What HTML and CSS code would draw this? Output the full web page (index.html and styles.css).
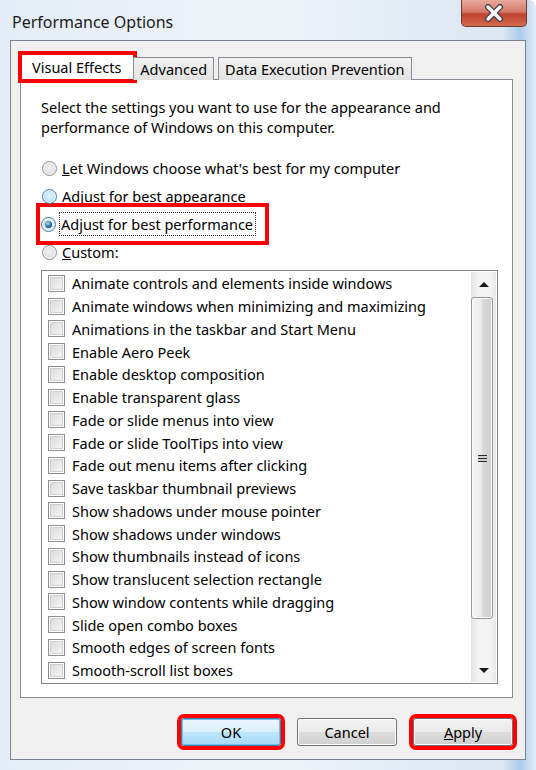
FILE: index.html
```html
<!DOCTYPE html>
<html lang="en">
<head>
    <meta charset="utf-8">
    <title>Performance Options</title>
    <link rel="stylesheet" href="styles.css">
</head>
<body>

    <div class="window">
        <div class="titlebar">
            <span class="title">Performance Options</span>
            <div class="close">
                <svg width="26" height="18" viewBox="0 0 26 18">
                    <path d="M7 3 L19 15 M19 3 L7 15" stroke="#3b3f4a" stroke-width="6" stroke-linecap="round"/>
                    <path d="M7 3 L19 15 M19 3 L7 15" stroke="#fff" stroke-width="3.4" stroke-linecap="round"/>
                </svg>
            </div>
        </div>

        <div class="client">
            <div class="tabs">
                <div class="tab active marked">Visual Effects</div>
                <div class="tab">Advanced</div>
                <div class="tab">Data Execution Prevention</div>
            </div>

            <div class="panel">
                <p class="intro">Select the settings you want to use for the appearance and performance of Windows on this computer.</p>

                <div class="radios">
                    <label class="radio"><span class="dot"></span><span><u>L</u>et Windows choose what's best for my computer</span></label>
                    <label class="radio hover"><span class="dot"></span><span>Adjust for best appearance</span></label>
                    <label class="radio checked marked"><span class="dot"></span><span class="focus">Adjust for best performance</span></label>
                    <label class="radio"><span class="dot"></span><span><u>C</u>ustom:</span></label>
                </div>

                <div class="listbox">
                    <ul class="items">
                        <li><span class="box"></span>Animate controls and elements inside windows</li>
                        <li><span class="box"></span>Animate windows when minimizing and maximizing</li>
                        <li><span class="box"></span>Animations in the taskbar and Start Menu</li>
                        <li><span class="box"></span>Enable Aero Peek</li>
                        <li><span class="box"></span>Enable desktop composition</li>
                        <li><span class="box"></span>Enable transparent glass</li>
                        <li><span class="box"></span>Fade or slide menus into view</li>
                        <li><span class="box"></span>Fade or slide ToolTips into view</li>
                        <li><span class="box"></span>Fade out menu items after clicking</li>
                        <li><span class="box"></span>Save taskbar thumbnail previews</li>
                        <li><span class="box"></span>Show shadows under mouse pointer</li>
                        <li><span class="box"></span>Show shadows under windows</li>
                        <li><span class="box"></span>Show thumbnails instead of icons</li>
                        <li><span class="box"></span>Show translucent selection rectangle</li>
                        <li><span class="box"></span>Show window contents while dragging</li>
                        <li><span class="box"></span>Slide open combo boxes</li>
                        <li><span class="box"></span>Smooth edges of screen fonts</li>
                        <li><span class="box"></span>Smooth-scroll list boxes</li>
                    </ul>
                    <div class="scrollbar">
                        <div class="arrow up"></div>
                        <div class="thumb"><span class="grip"></span></div>
                        <div class="track"></div>
                        <div class="arrow down"></div>
                    </div>
                </div>
            </div>

            <div class="buttons">
                <button class="btn default marked">OK</button>
                <button class="btn">Cancel</button>
                <button class="btn marked"><u>A</u>pply</button>
            </div>
        </div>
    </div>

</body>
</html>
```

FILE: styles.css
```css
body {
    margin: 0;
    background-color: #fff;
    font-family: "Noto Sans", "DejaVu Sans", sans-serif;
    font-size: 14.5px;
    color: #000;
}
.window {
    width: 536px;
    height: 770px;
    box-sizing: border-box;
    padding: 0 10px 10px 10px;
    display: flex;
    flex-direction: column;
    background: linear-gradient(to right, #e4ecf5 0%, #eef3f8 50%, #dbe6f2 94%, #a9cbea 97%, #e6edf5 100%);
    border-top-right-radius: 8px;
}
.titlebar {
    height: 40px;
    display: flex;
    justify-content: space-between;
    align-items: flex-start;
    flex-shrink: 0;
}
.title {
    font-size: 16px;
    color: #1c1c1c;
    margin: 11px 0 0 2px;
}
.close {
    width: 66px;
    height: 27px;
    box-sizing: border-box;
    margin-right: -1px;
    border: 1px solid #6e3a33;
    border-top: none;
    border-radius: 0 0 5px 5px;
    background: linear-gradient(#e8a99c 0%, #d67a6a 45%, #c04330 55%, #d36a4e 100%);
    display: flex;
    align-items: center;
    justify-content: center;
}
.client {
    flex: 1;
    background-color: #f0f0f0;
    border: 1px solid #79828d;
    display: flex;
    flex-direction: column;
    padding: 14px 12px 0 9px;
}
.tabs {
    display: flex;
    align-items: flex-end;
    height: 25px;
    position: relative;
    z-index: 1;
    margin-bottom: -1px;
}
.tab {
    height: 22px;
    padding: 0 6px;
    border: 1px solid #898c95;
    border-bottom: none;
    background: linear-gradient(#f2f2f2, #e3e3e3);
    line-height: 22px;
    margin-left: -1px;
}
.tab + .tab {
    margin-left: 4px;
}
.tab.active {
    height: 25px;
    background: #fff;
    padding: 0 12px 0 10px;
    margin-left: 1px;
    line-height: 25px;
}
.tab.active + .tab {
    margin-left: -1px;
}
.marked {
    outline: 4px solid #f00;
    outline-offset: 0;
}
.tab.marked {
    outline-offset: -1px;
}
.panel {
    height: 619px;
    box-sizing: border-box;
    background-color: #fff;
    border: 1px solid #898c95;
    padding: 17px 14px 14px 20px;
    display: flex;
    flex-direction: column;
}
.intro {
    margin: 0;
    line-height: 20px;
    width: 430px;
}
.radios {
    margin-top: 17px;
    display: flex;
    flex-direction: column;
}
.radio {
    display: flex;
    align-items: center;
    height: 28px;
    gap: 5px;
    margin-left: 1px;
    width: fit-content;
}
.radio .dot {
    width: 13px;
    height: 13px;
    border: 1px solid #8e8f8f;
    border-radius: 50%;
    background: radial-gradient(circle at 50% 45%, #f4f4f4 0%, #dcdcdc 70%, #c8c8c8 100%);
    box-shadow: inset 0 0 0 1px #fff;
    position: relative;
}
.radio.hover .dot {
    border-color: #3c7fb1;
    background: radial-gradient(circle at 50% 45%, #e6f5fd 0%, #b4dcf3 70%, #8ac4e8 100%);
}
.radio.checked .dot {
    border-color: #3c7fb1;
}
.radio.checked .dot::after {
    content: "";
    position: absolute;
    left: 3px;
    top: 3px;
    width: 7px;
    height: 7px;
    border-radius: 50%;
    background: radial-gradient(circle at 40% 35%, #9fe0ff 0%, #1a6fae 55%, #0d3c6e 100%);
}
.radio.marked {
    outline-offset: 1px;
    padding: 2px 10px 2px 0;
    margin: -2px 0;
}
.focus {
    outline: 1px dotted #333;
    outline-offset: 1px;
    padding-right: 1px;
}
.listbox {
    margin-top: 4px;
    flex: 1;
    border: 1px solid #828790;
    display: flex;
    padding: 1px 1px 1px 0;
}
.items {
    list-style: none;
    margin: 0;
    padding: 0 0 0 6px;
    flex: 1;
}
.items li {
    display: flex;
    align-items: center;
    height: 22.75px;
    gap: 7px;
}
.box {
    width: 15px;
    height: 15px;
    border: 1px solid #8e8f8f;
    box-shadow: inset 0 0 0 1px #fff, inset 0 0 0 2px #d0d0d0;
    background: linear-gradient(135deg, #d8d8d8, #f7f7f7);
    flex-shrink: 0;
}
.scrollbar {
    width: 25px;
    display: flex;
    flex-direction: column;
    background: linear-gradient(to right, #e3e3e3, #f3f3f3 30%, #f3f3f3 80%, #e8e8e8);
}
.arrow {
    height: 24px;
    display: flex;
    align-items: center;
    justify-content: center;
}
.arrow::after {
    content: "";
    width: 0;
    height: 0;
    border-left: 5px solid transparent;
    border-right: 5px solid transparent;
}
.up::after {
    border-bottom: 5px solid #1a1a1a;
}
.down {
    height: 22px;
}
.down::after {
    border-top: 5px solid #1a1a1a;
}
.thumb {
    height: 322px;
    margin: 1px 3px 0 0;
    box-sizing: border-box;
    border: 1px solid #979797;
    border-radius: 3px;
    background: linear-gradient(to right, #f4f4f4, #ececec 45%, #d8d8d8 55%, #cfcfcf);
    box-shadow: inset 0 0 0 1px #fbfbfb;
    display: flex;
    align-items: center;
    justify-content: center;
}
.grip {
    width: 9px;
    height: 7px;
    background: repeating-linear-gradient(#2a2a2a 0 1px, #d0d0d0 1px 3px);
}
.track {
    flex: 1;
}
.buttons {
    display: flex;
    justify-content: flex-end;
    gap: 16px;
    margin-top: 20px;
}
.btn {
    width: 100px;
    height: 28px;
    font-family: inherit;
    font-size: 14.5px;
    color: #000;
    border: 1px solid #707070;
    border-radius: 3px;
    background: linear-gradient(#f2f2f2 0%, #ebebeb 49%, #dddddd 50%, #cfcfcf 100%);
    box-shadow: inset 0 0 0 1px #fcfcfc;
    padding: 0;
}
.btn.default {
    border-color: #3c7fb1;
    background: linear-gradient(#eaf6fd 0%, #d9f0fc 49%, #bee6fd 50%, #a7d9f5 100%);
    box-shadow: inset 0 0 0 1px #6ec2f0;
}
.btn.marked {
    outline-offset: 0;
}
```
